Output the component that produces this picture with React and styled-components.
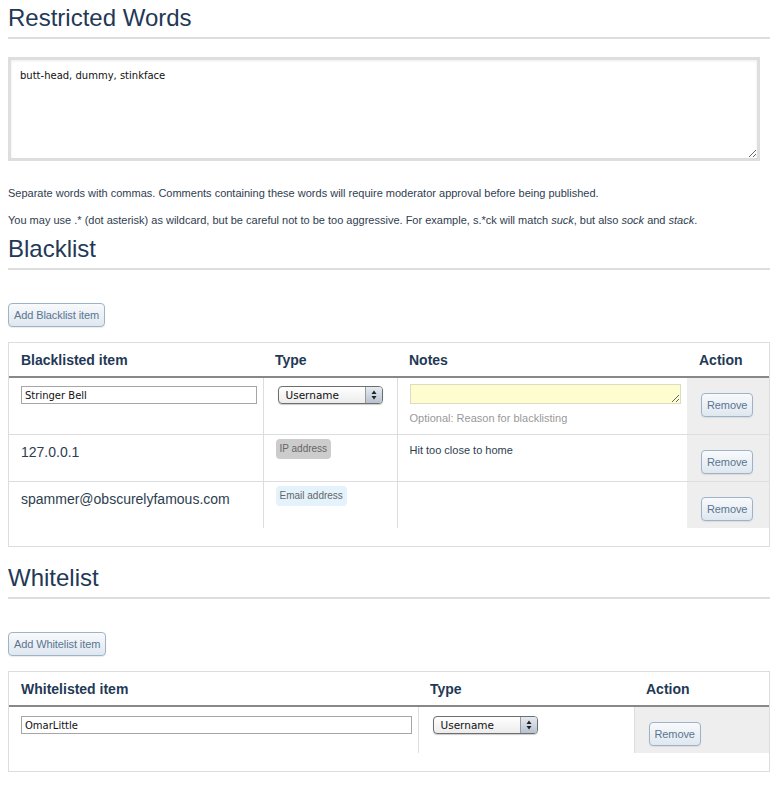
import React from 'react'
import styled, { createGlobalStyle } from 'styled-components'

const GlobalStyle = createGlobalStyle`
  html, body {
    margin: 0;
    padding: 0;
    background: #fff;
  }
  body {
    font-family: "Liberation Sans", Arial, sans-serif;
    color: #2d3e50;
  }
`

const blacklist = [
  { kind: 'edit', item: 'Stringer Bell', type: 'Username' },
  { kind: 'ip', item: '127.0.0.1', type: 'IP address', notes: 'Hit too close to home' },
  { kind: 'email', item: 'spammer@obscurelyfamous.com', type: 'Email address', notes: '' },
]

const Page = styled.div`
  padding: 4px 12px 20px 8px;
  width: 762px;
`

const Heading = styled.h2`
  margin: ${({ $mt }) => $mt || 0}px 0 0;
  font-size: 24px;
  line-height: 28px;
  font-weight: normal;
  color: #1f3956;
  padding-bottom: 5px;
  border-bottom: 2px solid #dddddd;
`

const WordsArea = styled.textarea`
  display: block;
  box-sizing: border-box;
  margin-top: 18px;
  width: 752px;
  height: 104px;
  border: 3px solid #dedede;
  box-shadow: inset 0 1px 3px rgba(0, 0, 0, 0.08);
  padding: 9px 9px;
  font-family: "DejaVu Sans", sans-serif;
  font-size: 10px;
  line-height: 13px;
  color: #111;
  outline: none;
`

const Hint = styled.p`
  margin: ${({ $mt }) => $mt}px 0 0;
  font-size: 11px;
  line-height: 14px;
  color: #2f3d4f;
`

const Button = styled.button`
  display: block;
  box-sizing: border-box;
  height: 24px;
  padding: 0 5px;
  margin-top: ${({ $mt }) => $mt || 0}px;
  font-family: "Liberation Sans", Arial, sans-serif;
  font-size: 11px;
  letter-spacing: -0.1px;
  color: #5a7592;
  border: 1px solid #9eb3c8;
  border-radius: 4px;
  background: linear-gradient(#f8fafc, #dfe7ef);
  box-shadow: 0 1px 1px rgba(0, 0, 0, 0.08);
  cursor: pointer;
`

const TableBox = styled.div`
  box-sizing: border-box;
  width: 762px;
  margin-top: 15px;
  border: 1px solid #dddddd;
  padding-bottom: 18px;
`

const Table = styled.table`
  width: 100%;
  border-collapse: collapse;
  table-layout: fixed;
`

const Th = styled.th`
  text-align: left;
  font-size: 14px;
  line-height: 17px;
  font-weight: bold;
  color: #1f3956;
  height: 34px;
  padding: 2px 12px 0;
  box-sizing: border-box;
  border-bottom: 2px solid #888888;
`

const Row = styled.tr`
  & + & td {
    border-top: 1px solid #dddddd;
  }
`

const Td = styled.td`
  vertical-align: top;
  padding: ${({ $pt }) => $pt || 0}px 6px ${({ $pb }) => $pb || 0}px ${({ $pl }) => $pl || 12}px;
  border-right: ${({ $line }) => ($line ? '1px solid #dddddd' : 'none')};
  background: ${({ $action }) => ($action ? '#eeeeee' : 'transparent')};
  font-size: 14px;
  line-height: 18px;
`

const TextInput = styled.input`
  display: block;
  box-sizing: border-box;
  width: 100%;
  height: 18px;
  border: 1px solid #a6a6a6;
  padding: 1px 3px;
  font-family: "DejaVu Sans", sans-serif;
  font-size: 10px;
  color: #111;
  outline: none;
`

const SelectBox = styled.div`
  display: flex;
  box-sizing: border-box;
  width: 105px;
  height: 18px;
  margin-left: 2px;
  border: 1px solid #6e6e6e;
  border-radius: 4px;
  overflow: hidden;
  background: linear-gradient(#ffffff, #ececec);
  box-shadow: 0 1px 1px rgba(0, 0, 0, 0.2);
`

const SelectLabel = styled.span`
  flex: 1;
  padding-left: 7px;
  font-family: "DejaVu Sans", sans-serif;
  font-size: 10.5px;
  line-height: 16px;
  color: #111;
`

const SelectArrows = styled.span`
  width: 16px;
  display: flex;
  align-items: center;
  justify-content: center;
  border-left: 1px solid #9a9a9a;
  background: linear-gradient(#e6ebf1, #b7c2d0);
`

const Badge = styled.span`
  display: inline-block;
  padding: 0 4px;
  height: 20px;
  line-height: 20px;
  border-radius: 4px;
  font-size: 10px;
  color: #666;
  background: ${({ $bg }) => $bg};
`

const NotesArea = styled.textarea`
  display: block;
  box-sizing: border-box;
  width: 100%;
  height: 20px;
  margin: 0;
  padding: 2px 3px;
  border: 1px solid #dedcc0;
  background: #fdfdcf;
  font-family: "DejaVu Sans", sans-serif;
  font-size: 10px;
  outline: none;
`

const Optional = styled.div`
  margin-top: 7px;
  font-size: 11px;
  line-height: 14px;
  color: #999;
`

const NoteText = styled.div`
  font-size: 11px;
  line-height: 14px;
  color: #2d3e50;
`

const Select = ({ value }) => (
  <SelectBox>
    <SelectLabel>{value}</SelectLabel>
    <SelectArrows>
      <svg width="6" height="10" viewBox="0 0 6 10">
        <path d="M3 0.5 L5.5 4 H0.5 Z" fill="#222" />
        <path d="M3 9.5 L5.5 6 H0.5 Z" fill="#222" />
      </svg>
    </SelectArrows>
  </SelectBox>
)

const ActionCell = () => (
  <Td $action $pt={15} $pl={14} $pb={7}>
    <Button>Remove</Button>
  </Td>
)

const BlacklistRow = ({ row }) => {
  if (row.kind === 'edit') {
    return (
      <Row>
        <Td $line $pt={8}>
          <TextInput defaultValue={row.item} />
        </Td>
        <Td $line $pt={8}>
          <Select value={row.type} />
        </Td>
        <Td $pt={6} $pb={9}>
          <NotesArea />
          <Optional>Optional: Reason for blacklisting</Optional>
        </Td>
        <ActionCell />
      </Row>
    )
  }
  return (
    <Row>
      <Td $line $pt={8}>{row.item}</Td>
      <Td $line $pt={3}>
        <Badge $bg={row.kind === 'ip' ? '#cccccc' : '#e3f2fb'}>{row.type}</Badge>
      </Td>
      <Td $pt={8}>
        <NoteText>{row.notes}</NoteText>
      </Td>
      <ActionCell />
    </Row>
  )
}

export default function App() {
  return (
    <Page>
      <GlobalStyle />
      <Heading>Restricted Words</Heading>
      <WordsArea defaultValue="butt-head, dummy, stinkface" />
      <Hint $mt={25}>
        Separate words with commas. Comments containing these words will require moderator approval before being published.
      </Hint>
      <Hint $mt={13}>
        You may use .* (dot asterisk) as wildcard, but be careful not to be too aggressive. For example, s.*ck will match <i>suck</i>, but also <i>sock</i> and <i>stack</i>.
      </Hint>

      <Heading $mt={8}>Blacklist</Heading>
      <Button $mt={33}>Add Blacklist item</Button>
      <TableBox>
        <Table>
          <colgroup>
            <col style={{ width: 254 }} />
            <col style={{ width: 134 }} />
            <col style={{ width: 290 }} />
            <col style={{ width: 82 }} />
          </colgroup>
          <thead>
            <tr>
              <Th>Blacklisted item</Th>
              <Th>Type</Th>
              <Th>Notes</Th>
              <Th>Action</Th>
            </tr>
          </thead>
          <tbody>
            {blacklist.map((row, i) => (
              <BlacklistRow key={i} row={row} />
            ))}
          </tbody>
        </Table>
      </TableBox>

      <Heading $mt={17}>Whitelist</Heading>
      <Button $mt={33}>Add Whitelist item</Button>
      <TableBox>
        <Table>
          <colgroup>
            <col style={{ width: 409 }} />
            <col style={{ width: 216 }} />
            <col style={{ width: 135 }} />
          </colgroup>
          <thead>
            <tr>
              <Th>Whitelisted item</Th>
              <Th>Type</Th>
              <Th>Action</Th>
            </tr>
          </thead>
          <tbody>
            <Row>
              <Td $line $pt={9}>
                <TextInput defaultValue="OmarLittle" />
              </Td>
              <Td $line $pt={9}>
                <Select value="Username" />
              </Td>
              <ActionCell />
            </Row>
          </tbody>
        </Table>
      </TableBox>
    </Page>
  )
}
